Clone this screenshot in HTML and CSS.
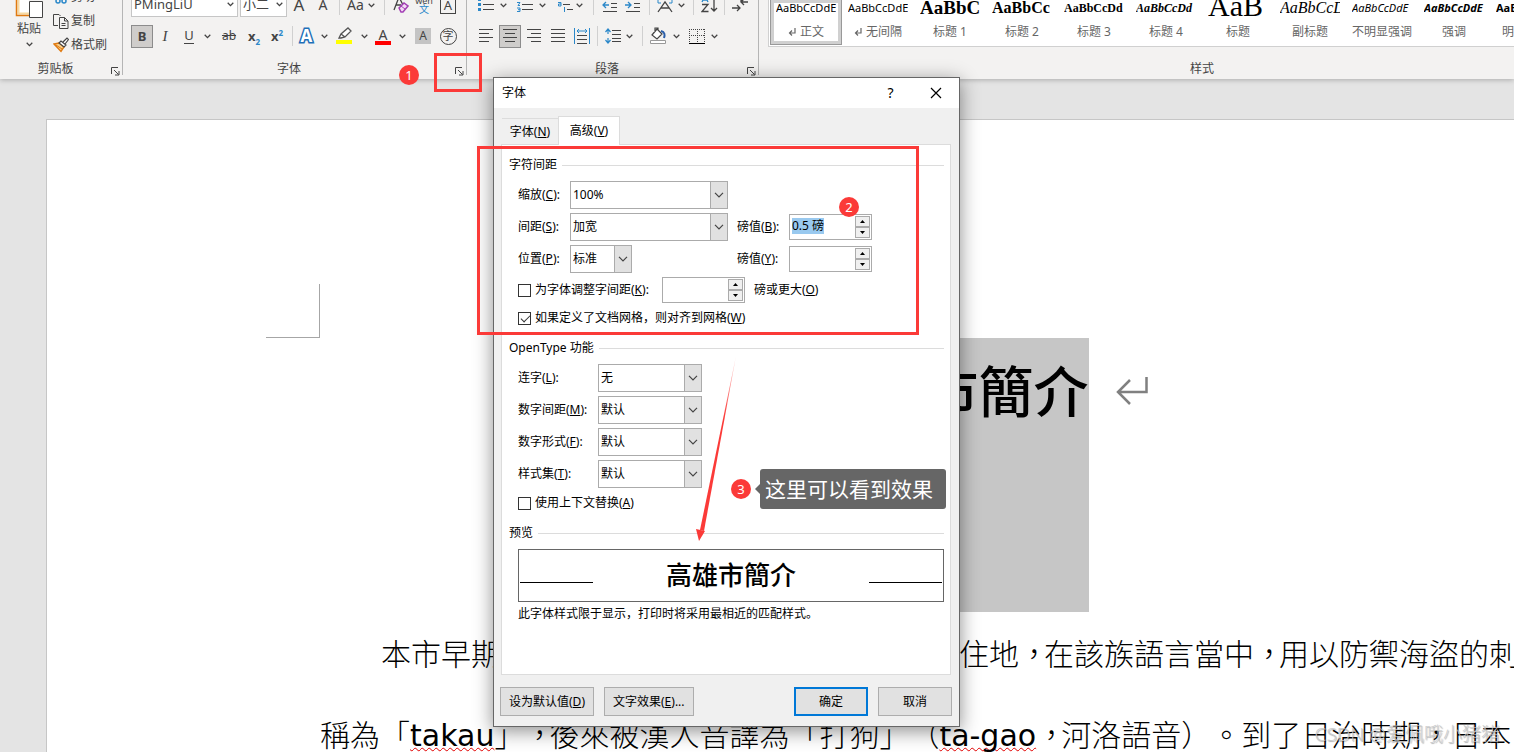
FILE: index.html
```
<!DOCTYPE html>
<html lang="zh-CN">
<head>
    <meta charset="UTF-8">
    <meta name="viewport" content="width=device-width, initial-scale=1.0">
    <title>字体</title>
    <link rel="stylesheet" href="styles.css">
</head>
<body>
    <svg class="symbols" aria-hidden="true">
        <symbol id="chev" viewBox="0 0 7 5"><path d="M.7.8 3.5 3.6 6.3.8" fill="none" stroke="#444" stroke-width="1.3"/></symbol>
        <symbol id="launch" viewBox="0 0 9 9"><path d="M.5 7V.5H7M3 3l4.5 4.5M8 4v4H4" fill="none" stroke="#444"/></symbol>
        <symbol id="down" viewBox="0 0 10 6"><path d="M1 .8 5 4.8 9 .8" fill="none" stroke="#444" stroke-width="1.2"/></symbol>
        <symbol id="tri-up" viewBox="0 0 5 3"><path d="M0 3 2.5 0 5 3z"/></symbol>
        <symbol id="tri-down" viewBox="0 0 5 3"><path d="M0 0 2.5 3 5 0z"/></symbol>
        <symbol id="return" viewBox="0 0 8 9"><path d="M7 0v5H1.500M4 2.500 1.500 5 4 7.500" fill="none" stroke="#666" stroke-width="1.2"/></symbol>
    </svg>

    <header class="ribbon">
        <section class="group clipboard">
            <div class="group-body">
                <button class="paste">
                    <svg width="30" height="20" viewBox="0 0 30 20"><path d="M5 0v14h10V0z" fill="#fff"/><path d="M4.500 0v14.500H15" fill="none" stroke="#f8d9a0" stroke-width="2"/><path d="M2.500 0v16.500H15" fill="none" stroke="#e07a10" stroke-width="1.500"/><path d="M15.500 2.500v16h13v-16z" fill="#fff" stroke="#444"/></svg>
                    <span>粘贴</span>
                    <svg width="7" height="5"><use href="#chev"/></svg>
                </button>
                <div class="clip-list">
                    <button><svg width="16" height="16" viewBox="0 0 16 16"><path d="m5 0 5 10M11 0 6 10" stroke="#444"/><circle cx="5" cy="12" r="2" fill="none" stroke="#2b88c9" stroke-width="1.500"/><circle cx="11" cy="12" r="2" fill="none" stroke="#2b88c9" stroke-width="1.500"/></svg>剪切</button>
                    <button><svg width="16" height="16" viewBox="0 0 16 16"><path d="M5 12.500H.5V1.500H6L7.500 3M6.500 4.500h5l3.500 3.500v7.500H6.500zM11.500 4.500V8H15M8.500 10.500h4M8.500 12.500h4" fill="none" stroke="#444"/></svg>复制</button>
                    <button><svg width="16" height="16" viewBox="0 0 16 16"><path d="m1 7 5-1 5 4-3 4.500z" fill="#f9d08b" stroke="#e07a10" stroke-width="1.400"/><path d="m3 8 6 4" stroke="#e07a10"/><path d="M6 6 8 4l5 4-2 2zM10 5l4-4 1.500 1.500L12 7" fill="#fff" stroke="#444" stroke-width="1.200"/></svg>格式刷</button>
                </div>
            </div>
            <footer><span>剪贴板</span><button class="launcher" aria-label="剪贴板"><svg width="9" height="9"><use href="#launch"/></svg></button></footer>
        </section>

        <section class="group font-group">
            <div class="group-body">
                <div class="tools font-top">
                    <div class="box"><input aria-label="字体" value="PMingLiU"><svg width="7" height="5"><use href="#chev"/></svg></div>
                    <div class="box"><input aria-label="字号" value="小二"><svg width="7" height="5"><use href="#chev"/></svg></div>
                    <button class="grow">A</button>
                    <button class="shrink">A</button>
                    <i class="sep"></i>
                    <button class="case">Aa</button>
                    <svg width="7" height="5"><use href="#chev"/></svg>
                    <i class="sep"></i>
                    <svg width="16" height="18" viewBox="0 0 16 18"><path d="m1 14 5-13 4 8M3 9h5" fill="none" stroke="#444" stroke-width="1.300"/><path d="m6 12 5-5 4 3-5 6H8z" fill="#f3dcf5" stroke="#a33fb5" stroke-width="1.500"/><path d="m8 10 4 3" stroke="#a33fb5"/></svg>
                    <button class="pinyin"><span>wén</span><b>文</b></button>
                    <button class="framed">A</button>
                </div>
                <div class="tools font-bottom">
                    <button class="pressed bold">B</button>
                    <button class="italic">I</button>
                    <button class="under">U</button>
                    <svg width="7" height="5"><use href="#chev"/></svg>
                    <button class="strike"><s>ab</s></button>
                    <button class="script">x<sub>2</sub></button>
                    <button class="script">x<sup>2</sup></button>
                    <i class="sep"></i>
                    <button class="effects">A</button>
                    <svg width="7" height="5"><use href="#chev"/></svg>
                    <svg width="16" height="18" viewBox="0 0 16 18"><path d="M0 13h16v4H0z" fill="#ff0"/><path d="m3 11 2-4 7-6 3 3-6 6-4 1zM5 7l4 3" fill="#fff" stroke="#555" stroke-width="1.300"/></svg>
                    <svg width="7" height="5"><use href="#chev"/></svg>
                    <button class="color">A</button>
                    <svg width="7" height="5"><use href="#chev"/></svg>
                    <button class="shade">A</button>
                    <button class="circled">字</button>
                </div>
            </div>
            <footer><span>字体</span><button class="launcher" aria-label="字体"><svg width="9" height="9"><use href="#launch"/></svg></button></footer>
        </section>

        <section class="group para-group">
            <div class="group-body">
                <div class="tools para-top">
                    <svg width="16" height="16" viewBox="0 0 16 16"><path d="M0 1h3v3H0zM0 6h3v3H0zM0 11h3v3H0z" fill="#2b88c9"/><path d="M5 2.500h11M5 7.500h11M5 12.500h11" stroke="#444"/></svg>
                    <svg width="7" height="5"><use href="#chev"/></svg>
                    <svg width="16" height="16" viewBox="0 0 16 16"><path d="M0 5.500h3L1 8.500h2M0 11h3v3.500H0M1 12.700h2" fill="none" stroke="#2b88c9"/><path d="M5 2.500h11M5 7.500h11M5 12.500h11" stroke="#444"/></svg>
                    <svg width="7" height="5"><use href="#chev"/></svg>
                    <svg class="end" width="16" height="16" viewBox="0 0 16 16"><path d="M0 5.500h3V9H.5V7H3M6.500 10v5" fill="none" stroke="#2b88c9"/><path d="M5 7.500h7M9 12.500h6" stroke="#444"/></svg>
                    <svg width="7" height="5"><use href="#chev"/></svg>
                    <i class="sep"></i>
                    <svg width="16" height="16" viewBox="0 0 16 16"><path d="M0 2.500h16M9 6.500h6M9 10.500h6M1 14.500h14" stroke="#444"/><path d="M7 8H1m3-3L1 8l3 3" fill="none" stroke="#2b88c9" stroke-width="1.300"/></svg>
                    <svg width="16" height="16" viewBox="0 0 16 16"><path d="M0 2.500h16M9 6.500h6M9 10.500h6M1 14.500h14" stroke="#444"/><path d="M0 8h6M3 5l3 3-3 3" fill="none" stroke="#2b88c9" stroke-width="1.300"/></svg>
                    <i class="sep"></i>
                    <svg width="18" height="16" viewBox="0 0 18 16"><path d="m2 15 7-10 7 10M5 11h8" fill="none" stroke="#444" stroke-width="1.300"/><path d="M2 3v3h3M16 3v3h-3" fill="none" stroke="#2b88c9"/></svg>
                    <svg width="7" height="5"><use href="#chev"/></svg>
                    <i class="sep"></i>
                    <svg width="17" height="18" viewBox="0 0 17 18"><path d="M1 6 4 0l3 6M2 4h4" fill="none" stroke="#2b88c9" stroke-width="1.300"/><path d="M1 8.500h6l-6 7h6.500M13 0v15m-3-3 3 3 3-3" fill="none" stroke="#444" stroke-width="1.300"/></svg>
                    <i class="sep"></i>
                    <svg width="16" height="16" viewBox="0 0 16 16"><path d="M0 11h8M5 8l3 3-3 3M16 5H9m3-3L9 5l3 3M9 5V1" fill="none" stroke="#444" stroke-width="1.300"/></svg>
                </div>
                <div class="tools para-bottom">
                    <svg width="16" height="16" viewBox="0 0 16 16"><path d="M1 1.500h14M1 5.500h10M1 9.500h14M1 13.500h10" stroke="#444"/></svg>
                    <button class="pressed" aria-label="居中"><svg width="16" height="16" viewBox="0 0 16 16"><path d="M1 1.500h14M3 5.500h10M1 9.500h14M3 13.500h10" stroke="#444"/></svg></button>
                    <svg width="16" height="16" viewBox="0 0 16 16"><path d="M1 1.500h14M5 5.500h10M1 9.500h14M5 13.500h10" stroke="#444"/></svg>
                    <svg width="16" height="16" viewBox="0 0 16 16"><path d="M1 1.500h14M1 5.500h14M1 9.500h14M1 13.500h14" stroke="#444"/></svg>
                    <svg width="16" height="16" viewBox="0 0 16 16"><path d="M.5 0v16M15.500 0v16M3 3h10M5 1 3 3l2 2M11 1l2 2-2 2" fill="none" stroke="#2b88c9"/><path d="M3 7.500h10M3 11.500h10M3 15.500h10" stroke="#444"/></svg>
                    <i class="sep"></i>
                    <svg width="16" height="16" viewBox="0 0 16 16"><path d="M3 1v5M3 10v5M.5 4 3 1l2.500 3M.5 12 3 15l2.500-3" fill="none" stroke="#2b88c9" stroke-width="1.200"/><path d="M7 2.500h9M7 6.500h9M7 10.500h9M7 13.500h9" stroke="#444"/></svg>
                    <svg width="7" height="5"><use href="#chev"/></svg>
                    <i class="sep"></i>
                    <svg width="16" height="18" viewBox="0 0 16 18"><path d="m2 8 5-6 5 5-5 5zM5 5V1h3v3" fill="#fff" stroke="#444" stroke-width="1.200"/><path d="M11 4c4 1 4 4 3 7" fill="none" stroke="#2b5fa9" stroke-width="2"/><path d="M.5 13.500h15v3H.5z" fill="#fff" stroke="#999"/></svg>
                    <svg width="7" height="5"><use href="#chev"/></svg>
                    <svg width="16" height="16" viewBox="0 0 16 16"><path d="M.5 1v13M15.500 1v13M8.500 1v13M0 1.500h16M0 7.500h16" stroke="#444" stroke-dasharray="1 1"/><path d="M0 15.500h16" stroke="#000"/></svg>
                    <svg width="7" height="5"><use href="#chev"/></svg>
                </div>
            </div>
            <footer><span>段落</span><button class="launcher" aria-label="段落"><svg width="9" height="9"><use href="#launch"/></svg></button></footer>
        </section>

        <section class="group styles-group">
            <div class="gallery">
                <button class="style current"><span class="sample">AaBbCcDdE</span><span class="name"><svg width="8" height="9"><use href="#return"/></svg> 正文</span></button>
                <button class="style"><span class="sample">AaBbCcDdE</span><span class="name"><svg width="8" height="9"><use href="#return"/></svg> 无间隔</span></button>
                <button class="style"><span class="sample h1">AaBbCc</span><span class="name">标题 1</span></button>
                <button class="style"><span class="sample h2">AaBbCc</span><span class="name">标题 2</span></button>
                <button class="style"><span class="sample h3">AaBbCcDd</span><span class="name">标题 3</span></button>
                <button class="style"><span class="sample h3 slant">AaBbCcDd</span><span class="name">标题 4</span></button>
                <button class="style"><span class="sample title">AaB</span><span class="name">标题</span></button>
                <button class="style"><span class="sample subtitle">AaBbCcD</span><span class="name">副标题</span></button>
                <button class="style"><span class="sample slant">AaBbCcDdE</span><span class="name">不明显强调</span></button>
                <button class="style"><span class="sample slant strong">AaBbCcDdE</span><span class="name">强调</span></button>
                <button class="style"><span class="sample strong">AaBbCcDd</span><span class="name">明显强调</span></button>
            </div>
            <footer><span>样式</span></footer>
        </section>
    </header>

    <main class="workspace">
        <div class="paper">
            <div class="crop-mark"></div>
            <article lang="zh-TW">
                <h1><span>高雄市簡介</span><svg width="32" height="28" viewBox="0 0 32 28"><path d="M30.500 0v15H2M14 3 2 15l12 12" fill="none" stroke="#808080" stroke-width="2.500"/></svg></h1>
                <p class="first"><span class="run">本市早期為西拉雅平埔族支族馬卡道族的居</span>住地<i>，</i>在該族語言當中<i>，</i>用以防禦海盜的刺竹林</p>
                <p>稱為「<span class="latin">takau</span>」<i>，</i>後來被漢人音譯為「打狗」（<span class="latin">ta-gao</span><i>，</i>河洛語音）。到了日治時期，日本</p>
            </article>
        </div>
    </main>

    <form class="dialog">
        <div class="titlebar">
            <span>字体</span>
            <button type="button" aria-label="帮助">?</button>
            <button type="button" aria-label="关闭"><svg width="12" height="12" viewBox="0 0 12 12"><path d="m1 1 10 10M11 1 1 11" stroke="#000" stroke-width="1.200"/></svg></button>
        </div>
        <div class="tabs">
            <button type="button">字体(<u>N</u>)</button>
            <button type="button" class="active">高级(<u>V</u>)</button>
        </div>
        <div class="panel">
            <h2>字符间距</h2>
            <div class="rows">
                <div class="row">
                    <label for="scale">缩放(<u>C</u>):</label>
                    <div class="combo wide"><select id="scale"><option>100%</option></select><span><svg width="10" height="6"><use href="#down"/></svg></span></div>
                </div>
                <div class="row">
                    <label for="spacing">间距(<u>S</u>):</label>
                    <div class="combo wide"><select id="spacing"><option>加宽</option></select><span><svg width="10" height="6"><use href="#down"/></svg></span></div>
                    <label for="by1">磅值(<u>B</u>):</label>
                    <div class="spin"><input id="by1" type="text" value="0.5 磅"><div><button type="button" aria-label="增加"><svg width="5" height="3"><use href="#tri-up"/></svg></button><button type="button" aria-label="减少"><svg width="5" height="3"><use href="#tri-down"/></svg></button></div></div>
                </div>
                <div class="row">
                    <label for="position">位置(<u>P</u>):</label>
                    <div class="combo small"><select id="position"><option>标准</option></select><span><svg width="10" height="6"><use href="#down"/></svg></span></div>
                    <label for="by2">磅值(<u>Y</u>):</label>
                    <div class="spin"><input id="by2" type="text"><div><button type="button" aria-label="增加"><svg width="5" height="3"><use href="#tri-up"/></svg></button><button type="button" aria-label="减少"><svg width="5" height="3"><use href="#tri-down"/></svg></button></div></div>
                </div>
                <div class="kerning">
                    <label class="check"><input type="checkbox">为字体调整字间距(<u>K</u>):</label>
                    <div class="spin"><input id="kern" type="text"><div><button type="button" aria-label="增加"><svg width="5" height="3"><use href="#tri-up"/></svg></button><button type="button" aria-label="减少"><svg width="5" height="3"><use href="#tri-down"/></svg></button></div></div>
                    <label for="kern">磅或更大(<u>O</u>)</label>
                </div>
                <label class="check"><input type="checkbox" checked>如果定义了文档网格，则对齐到网格(<u>W</u>)</label>
            </div>

            <h2>OpenType 功能</h2>
            <div class="rows opentype">
                <div class="row">
                    <label for="liga">连字(<u>L</u>):</label>
                    <div class="combo"><select id="liga"><option>无</option></select><span><svg width="10" height="6"><use href="#down"/></svg></span></div>
                </div>
                <div class="row">
                    <label for="numspace">数字间距(<u>M</u>):</label>
                    <div class="combo"><select id="numspace"><option>默认</option></select><span><svg width="10" height="6"><use href="#down"/></svg></span></div>
                </div>
                <div class="row">
                    <label for="numform">数字形式(<u>F</u>):</label>
                    <div class="combo"><select id="numform"><option>默认</option></select><span><svg width="10" height="6"><use href="#down"/></svg></span></div>
                </div>
                <div class="row">
                    <label for="styleset">样式集(<u>T</u>):</label>
                    <div class="combo"><select id="styleset"><option>默认</option></select><span><svg width="10" height="6"><use href="#down"/></svg></span></div>
                </div>
                <label class="check"><input type="checkbox">使用上下文替换(<u>A</u>)</label>
            </div>

            <h2>预览</h2>
            <div class="rows">
                <div class="preview" lang="zh-TW"><hr><span>高雄市簡介</span><hr></div>
                <p>此字体样式限于显示，打印时将采用最相近的匹配样式。</p>
            </div>
        </div>
        <div class="actions">
            <button type="button">设为默认值(<u>D</u>)</button>
            <button type="button">文字效果(<u>E</u>)...</button>
            <button type="button" class="ok">确定</button>
            <button type="button" class="cancel">取消</button>
        </div>
    </form>

    <!-- 标注 -->
    <div class="frame frame-launcher"></div>
    <div class="frame frame-spacing"></div>
    <span class="pin pin1">1</span>
    <span class="pin pin2">2</span>
    <span class="pin pin3">3</span>
    <div class="callout">这里可以看到效果</div>
    <svg class="arrow" width="44" height="186" viewBox="0 0 44 186">
        <defs><linearGradient id="fade" x1="0" y1="0" x2="0" y2="1"><stop offset="0" stop-color="#fb3a38" stop-opacity=".2"/><stop offset=".35" stop-color="#fb3a38"/></linearGradient></defs>
        <path d="M41 0 5 174l4 1z" fill="url(#fade)"/>
        <path d="m1 173 9 2-6 10z" fill="#fb3a38"/>
    </svg>
    <div class="watermark">CSDN @爱佩哦小猪猪</div>

    <script>
        document.getElementById('by1').select();
    </script>
</body>
</html>
```
FILE: styles.css
```
* {
    box-sizing: border-box;
}
body {
    margin: 0;
    height: 100vh;
    overflow: hidden;
    display: flex;
    flex-direction: column;
    background: #e4e4e4;
    font: 12px/16px "Noto Sans", "Noto Sans CJK SC", sans-serif;
    color: #000;
}
button, input, select {
    font: inherit;
    color: inherit;
    margin: 0;
    padding: 0;
    border: 0;
    border-radius: 0;
    background: none;
    outline: none;
}
svg {
    display: block;
    flex: none;
}
.symbols {
    position: absolute;
    width: 0;
    height: 0;
}

/* 功能区 */
.ribbon {
    display: flex;
    height: 79px;
    flex: none;
    overflow: hidden;
    background: #f3f2f1;
    color: #444;
    box-shadow: 0 1px 5px rgba(0,0,0,0.25);
    z-index: 1;
}
.group {
    display: flex;
    flex-direction: column;
    justify-content: space-between;
    flex: none;
    position: relative;
}
.group::after {
    content: "";
    position: absolute;
    right: 0;
    top: 0;
    bottom: 4px;
    border-right: 1px solid #b5b5b5;
}
.clipboard { width: 123px; }
.font-group { width: 344px; }
.para-group { width: 292px; }
.styles-group {
    flex: 1;
    min-width: 0;
}
.styles-group::after { display: none; }
.group footer {
    display: flex;
    align-items: center;
    height: 20px;
}
.group footer span {
    flex: 1;
    text-align: center;
}
.styles-group footer { padding-left: 131px; }
.group .launcher {
    width: 12px;
    padding-top: 4px;
}
.group-body {
    display: flex;
    flex-direction: column;
    justify-content: flex-end;
    gap: 7px;
    height: 59px;
    padding: 0 8px 11px;
}
.clipboard .group-body {
    flex-direction: row;
    justify-content: flex-start;
    align-items: flex-end;
    padding: 0 0 2px 12px;
}
.paste {
    display: flex;
    flex-direction: column;
    align-items: center;
    width: 34px;
    gap: 2px;
    padding-bottom: 10px;
}
.paste svg:last-child { margin-top: 3px; }
.clip-list button {
    display: flex;
    align-items: center;
    gap: 2px;
    height: 24px;
    margin-left: 7px;
}
.clip-list { margin-left: -7px; }
.tools {
    display: grid;
    align-items: center;
    justify-items: center;
    height: 24px;
    flex: none;
}
.font-top { grid-template-columns: 109px 47px 24px 24px 8px 25px 6px 20px 14px 32px 16px; }
.font-bottom { grid-template-columns: 22px 24px 24px 12px 32px 18px 28px 2px 27px 8px 32px 8px 30px 8px 34px 16px; }
.para-top { grid-template-columns: 22px 12px 32px 2px 31px 10px 18px 16px 30px 2px 30px 2px 22px 10px 20px 12px; }
.para-bottom { grid-template-columns: 22px 26px 22px 26px 22px 8px 24px 8px 18px 14px 22px 20px 14px; }
.end { justify-self: end; }
.sep {
    width: 1px;
    height: 20px;
    background: #d0d0d0;
}
.box {
    display: flex;
    align-items: center;
    justify-self: start;
    width: 107px;
    height: 24px;
    padding: 0 3px 2px 2px;
    border: 1px solid #c6c6c6;
    background: #fff;
}
.box + .box { width: 47px; }
.box input {
    flex: 1;
    min-width: 0;
    font-size: 13px;
}
.grow { font-size: 17px; }
.shrink, .case { font-size: 14px; }
.pinyin {
    display: flex;
    flex-direction: column;
    align-items: center;
    font-size: 9px;
    line-height: 9px;
}
.pinyin b {
    font-weight: 400;
    font-size: 10px;
    color: #2b88c9;
}
.framed {
    width: 16px;
    height: 18px;
    border: 1px solid #444;
    font-size: 13px;
}
.pressed {
    display: flex;
    align-items: center;
    justify-content: center;
    width: 22px;
    height: 23px;
    border: 1px solid #8c8c8c;
    background: #cfcdcb;
}
.bold {
    font-weight: 700;
    font-size: 13px;
}
.italic {
    font-family: "Liberation Serif", serif;
    font-style: italic;
    font-size: 15px;
}
.under {
    font-size: 13px;
    border-bottom: 1px solid #444;
    line-height: 15px;
}
.script {
    font-weight: 700;
    font-size: 13px;
}
.script sub, .script sup {
    font-size: 8px;
    line-height: 0;
    color: #2b88c9;
}
.effects {
    font-weight: 700;
    font-size: 17px;
    line-height: 20px;
    color: #fff;
    -webkit-text-stroke: 3px #1e6fb8;
    paint-order: stroke;
}
.color {
    width: 16px;
    height: 18px;
    border-bottom: 4px solid #f00;
    font-size: 14px;
    line-height: 13px;
}
.shade {
    width: 16px;
    height: 16px;
    background: #c4c4c4;
}
.circled {
    width: 17px;
    height: 17px;
    border: 1px solid #444;
    border-radius: 50%;
    font-size: 11px;
    line-height: 14px;
}
.gallery {
    display: flex;
    height: 47px;
    margin-left: 9px;
    padding-left: 1px;
    overflow: hidden;
    background: #fff;
    border-left: 1px solid #d0d0d0;
    border-bottom: 1px solid #d0d0d0;
}
.style {
    display: flex;
    flex-direction: column;
    justify-content: flex-end;
    flex: none;
    width: 72px;
    height: 45px;
    padding: 0 6px 4px;
}
.style.current {
    padding: 0 5px 3px;
    border: 1px solid #999;
    border-width: 0 1px 1px;
    box-shadow: inset 0 0 0 3px #d0d0d0;
}
.sample {
    height: 22px;
    overflow-x: clip;
    text-align: left;
    white-space: nowrap;
    font-size: 11px;
    line-height: 14px;
    color: #000;
}
.h1, .h2, .h3, .title, .subtitle { font-family: "Liberation Serif", serif; }
.h1, .h2, .h3 { font-weight: 700; }
.h1 { font-size: 19px; }
.h2 { font-size: 16px; }
.h3 { font-size: 12px; }
.title { font-size: 30px; line-height: 10px; }
.subtitle { font-size: 16px; font-style: italic; }
.slant { font-style: italic; }
.strong { font-weight: 700; }
.name {
    display: flex;
    align-items: center;
    justify-content: center;
    gap: 4px;
    height: 18px;
    white-space: nowrap;
    color: #666;
}

/* 文档 */
.workspace {
    flex: 1;
    min-height: 0;
    padding: 40px 0 0 46px;
}
.paper {
    height: 100%;
    padding: 164px 0 0 219px;
    border: 1px solid #c6c6c6;
    border-width: 1px 0 0 1px;
    background: #fff;
}
.crop-mark {
    width: 54px;
    height: 54px;
    border: 1px solid #a6a6a6;
    border-width: 0 1px 1px 0;
}
article {
    margin: 0 -127px 0 54px;
    font-family: "Noto Sans CJK TC", sans-serif;
    font-weight: 300;
    text-spacing-trim: space-all;
}
article h1 {
    display: flex;
    justify-content: center;
    gap: 27px;
    margin: 0;
    font-size: 55px;
    line-height: 100px;
    font-weight: 500;
}
article h1 span {
    padding-bottom: 174px;
    background: #c6c6c6;
}
article h1 svg { margin-top: 39px; }
article p {
    margin: 0;
    font-size: 30px;
    line-height: 81px;
    white-space: nowrap;
}
article .first { padding-left: 61px; }
.run {
    display: inline-block;
    width: 578px;
}
article i {
    display: inline-block;
    width: 25px;
    font-style: normal;
}
.latin {
    font-family: "DejaVu Sans", sans-serif;
    font-weight: 400;
    text-decoration: underline wavy #e00000 1px;
    text-underline-offset: 1px;
    text-decoration-skip-ink: none;
}

/* 对话框 */
.dialog {
    position: absolute;
    left: 493px;
    top: 77px;
    width: 467px;
    border: 1px solid #666;
    background: #f0f0f0;
    box-shadow: 0 4px 18px rgba(0,0,0,0.45);
    z-index: 2;
}
.titlebar {
    display: flex;
    align-items: center;
    height: 30px;
    padding: 0 1px 1px 8px;
    background: #fff;
}
.titlebar span { flex: 1; }
.titlebar button {
    display: flex;
    justify-content: center;
    width: 45px;
    font-size: 14px;
}
.tabs {
    display: flex;
    align-items: flex-end;
    padding: 8px 0 0 8px;
}
.tabs button {
    width: 56px;
    height: 26px;
    border-top: 1px solid #dcdcdc;
}
.tabs .active {
    width: 62px;
    height: 29px;
    margin-bottom: -1px;
    border: 1px solid #dcdcdc;
    border-bottom: 0;
    background: #fff;
}
.panel {
    margin: 0 8px 0 7px;
    min-height: 531px;
    padding: 12px 6px 0 7px;
    border: 1px solid #dcdcdc;
    background: #fff;
}
.panel h2 {
    display: flex;
    align-items: center;
    gap: 5px;
    margin: 11px 0 8px;
    font-size: 12px;
    font-weight: 400;
}
.panel h2:first-child { margin-top: 0; }
.panel h2::after {
    content: "";
    flex: 1;
    border-top: 1px solid #dcdcdc;
}
.rows {
    display: flex;
    flex-direction: column;
    gap: 4px;
    padding-left: 9px;
}
.row {
    display: grid;
    grid-template-columns: 52px 167px 52px 83px;
    align-items: center;
    height: 28px;
}
.opentype .row { grid-template-columns: 80px 104px; }
.combo {
    display: flex;
    position: relative;
    height: 28px;
}
.wide { width: 158px; }
.small { width: 62px; }
.combo select {
    appearance: none;
    width: 100%;
    padding: 0 20px 1px 2px;
    border: 1px solid #ababab;
    background: #fff;
}
.combo span {
    position: absolute;
    right: 0;
    top: 0;
    bottom: 0;
    display: flex;
    align-items: center;
    justify-content: center;
    width: 18px;
    border: 1px solid #ababab;
    background: #e1e1e1;
    pointer-events: none;
}
.spin {
    display: flex;
    width: 83px;
    height: 26px;
    padding: 1px;
    border: 1px solid #ababab;
    background: #fff;
}
.spin input {
    flex: 1;
    min-width: 0;
    padding: 0 0 2px 1px;
}
.spin input::selection {
    background: #99c9ef;
    color: #000;
}
.spin div {
    display: grid;
    width: 15px;
}
.spin button {
    display: flex;
    align-items: center;
    justify-content: center;
    border: 1px solid #ababab;
    background: #f0f0f0;
}
.kerning {
    display: flex;
    align-items: center;
    height: 26px;
}
.kerning .spin { margin: 0 9px 0 13px; }
.check {
    display: flex;
    align-items: center;
    height: 22px;
}
.check input {
    appearance: none;
    width: 13px;
    height: 13px;
    margin-right: 4px;
    border: 1px solid #333;
    background: #fff;
}
.check input:checked::after {
    content: "";
    display: block;
    width: 8px;
    height: 4px;
    margin: 2px 0 0 2px;
    border: solid #333;
    border-width: 0 0 1px 1px;
    transform: rotate(-45deg);
}
.preview {
    display: flex;
    align-items: center;
    justify-content: space-between;
    height: 53px;
    padding: 0 1px 4px;
    border: 1px solid #666;
    font: 500 26px/46px "Noto Sans CJK TC", sans-serif;
}
.preview hr {
    width: 73px;
    margin: 18px 0 0;
    border: 0;
    border-top: 1px solid #000;
}
.panel p { margin: 0; }
.actions {
    display: flex;
    gap: 10px;
    padding: 12px 7px 10px 6px;
}
.actions button {
    height: 29px;
    padding: 0 8px;
    border: 1px solid #adadad;
    background: #e1e1e1;
}
.actions .ok, .actions .cancel { width: 74px; }
.actions .ok {
    margin-left: auto;
    border: 2px solid #0078d7;
}

/* 标注 */
.frame, .pin, .callout, .arrow, .watermark {
    position: absolute;
    z-index: 3;
}
.frame { border: 3px solid #fb3a38; }
.frame-launcher {
    left: 434px;
    top: 53px;
    width: 48px;
    height: 39px;
}
.frame-spacing {
    left: 477px;
    top: 146px;
    width: 442px;
    height: 189px;
}
.pin {
    width: 20px;
    height: 20px;
    border-radius: 50%;
    background: #fb3a38;
    color: #fff;
    font-size: 13px;
    line-height: 20px;
    text-align: center;
}
.pin1 { left: 399px; top: 65px; }
.pin2 { left: 839px; top: 197px; }
.pin3 { left: 731px; top: 479px; }
.callout {
    left: 760px;
    top: 469px;
    padding: 0 13px 0 5px;
    border-radius: 3px;
    background: #666;
    color: #fff;
    font-size: 21px;
    line-height: 40px;
}
.callout::before {
    content: "";
    position: absolute;
    left: -5px;
    top: 15px;
    border: solid transparent;
    border-width: 5px 5px 5px 0;
    border-right-color: #666;
}
.arrow {
    left: 695px;
    top: 356px;
}
.watermark {
    right: 14px;
    top: 720px;
    font-size: 19px;
    font-weight: 300;
    line-height: 28px;
    color: rgba(200,200,200,0.85);
    text-shadow: 1px 1px 1px rgba(0,0,0,0.3);
}
```
